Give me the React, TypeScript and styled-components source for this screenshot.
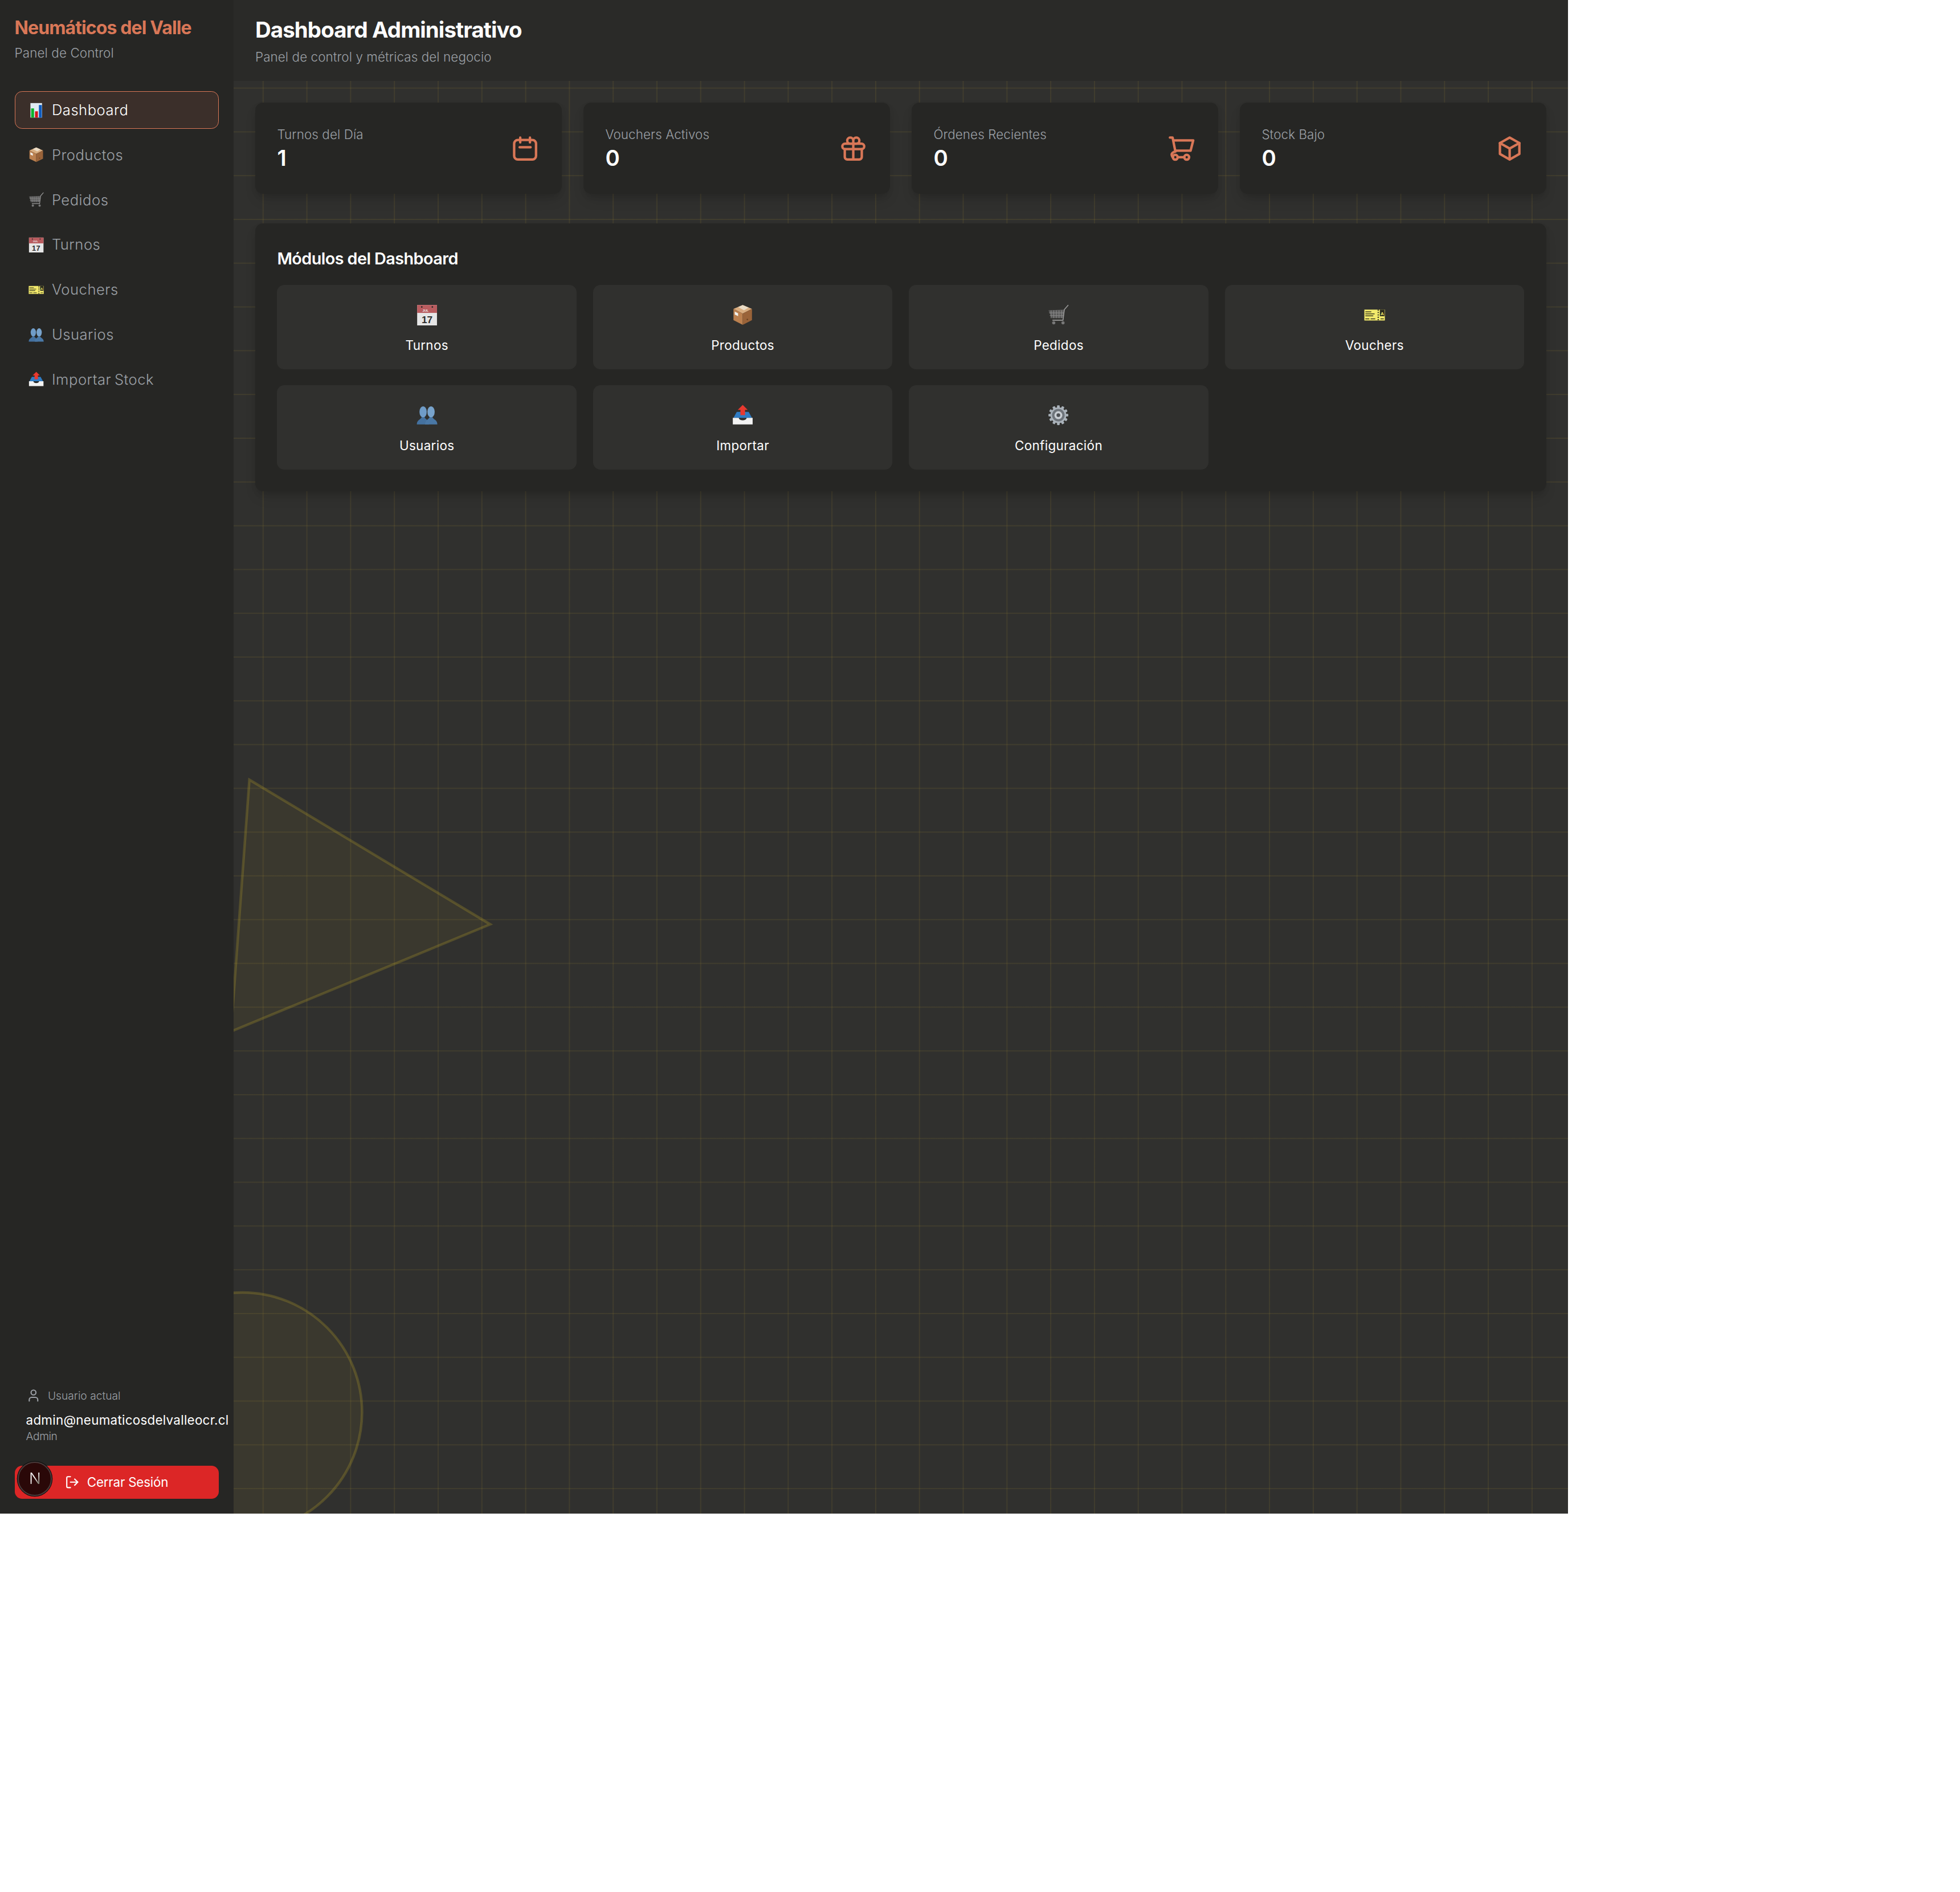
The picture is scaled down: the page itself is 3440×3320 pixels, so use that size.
import React from "react";
import styled, { createGlobalStyle } from "styled-components";
import { User, LogOut } from "lucide-react";

const Global = createGlobalStyle`
  html { font-size: 25.6px; }
  body { margin: 0; background: #fff; font-family: Inter, "Noto Sans", "Liberation Sans", sans-serif; }
  * { box-sizing: border-box; }
`;

const Page = styled.div`
  display: flex;
  width: 107.5rem;
  height: 103.75rem;
  overflow: hidden;
  background-color: #30302e;
  background-image:
    linear-gradient(rgba(205, 170, 50, 0.1) 0.0625rem, transparent 0.0625rem),
    linear-gradient(90deg, rgba(205, 170, 50, 0.1) 0.0625rem, transparent 0.0625rem);
  background-size: 3rem 3rem;
`;

const Sidebar = styled.aside`
  flex: 0 0 16rem;
  min-width: 0;
  display: flex;
  flex-direction: column;
  position: relative;
  background: #262624;
`;
const Brand = styled.div`
  padding: 1.05rem 1rem 1rem;
`;
const BrandName = styled.h1`
  margin: 0;
  font-size: 1.25rem;
  line-height: 1.75rem;
  font-weight: 700;
  letter-spacing: -0.028em;
  color: #d97757;
`;
const BrandSub = styled.p`
  margin: 0.2rem 0 0;
  font-size: 0.875rem;
  line-height: 1.25rem;
  font-weight: 300;
  letter-spacing: 0.005em;
  color: #9ca0a6;
`;
const Nav = styled.nav`
  flex: 1;
  display: flex;
  flex-direction: column;
  gap: 0.515rem;
  padding: 1rem;
`;
const NavItem = styled.a<{ $active?: boolean }>`
  display: flex;
  align-items: center;
  gap: 0.5625rem;
  height: 2.5625rem;
  padding: 0.04rem 0.95rem 0;
  border: 0.0625rem solid ${(p) => (p.$active ? "#d97757" : "transparent")};
  border-radius: 0.5rem;
  background: ${(p) => (p.$active ? "rgba(217, 119, 87, 0.12)" : "transparent")};
  color: ${(p) => (p.$active ? "#fff" : "#9ca0a6")};
  font-size: 1rem;
  line-height: 1.5rem;
  font-weight: 300;
  letter-spacing: 0.02em;
  word-spacing: -0.08em;
`;
const NavEmoji = styled.span`
  display: flex;
  width: 1rem;
  height: 1rem;
  font-size: 1.0625rem;
  align-items: center;
  justify-content: center;
`;
const Footer = styled.div`
  padding: 0 1rem 1rem;
`;
const UserCard = styled.div`
  padding: 0.75rem 0.75rem 0.75rem 0.78rem;
  margin-bottom: 0.75rem;
`;
const UserLabel = styled.div`
  display: flex;
  align-items: center;
  gap: 0.5rem;
  height: 1rem;
  margin-bottom: 0.55rem;
  font-size: 0.75rem;
  font-weight: 300;
  letter-spacing: 0;
  color: #9ca0a6;
  svg { width: 1rem; height: 1rem; }
`;
const UserEmail = styled.div`
  font-size: 0.875rem;
  line-height: 1.25rem;
  letter-spacing: 0.012em;
  color: #fff;
  white-space: nowrap;
`;
const UserRole = styled.div`
  font-size: 0.75rem;
  line-height: 1rem;
  font-weight: 300;
  color: #9ca0a6;
  letter-spacing: -0.02em;
`;
const LogoutButton = styled.button`
  display: flex;
  align-items: center;
  justify-content: center;
  gap: 0.5rem;
  width: 100%;
  height: 2.3rem;
  border: 0;
  border-radius: 0.5rem;
  background: #dc2626;
  color: #fff;
  font-family: inherit;
  font-size: 0.875rem;
  letter-spacing: -0.01em;
  svg { width: 1rem; height: 1rem; }
`;
const DevBadge = styled.div`
  position: absolute;
  left: 1.22rem;
  bottom: 1.2rem;
  width: 2.35rem;
  height: 2.35rem;
  border-radius: 50%;
  background: #2a0808;
  border: 0.08rem solid #4a3a3a;
  box-shadow: 0 0 0 0.05rem #111;
  display: flex;
  align-items: center;
  justify-content: center;
  padding-bottom: 0.1rem;
`;
const DevLetter = styled.span`
  font-size: 1.07rem;
  font-weight: 300;
  background: linear-gradient(135deg, #fff 45%, #554 90%);
  -webkit-background-clip: text;
  background-clip: text;
  color: transparent;
`;

const Column = styled.div`
  position: relative;
  flex: 1;
  min-width: 0;
  display: flex;
  flex-direction: column;
  overflow: hidden;
`;
const Deco = styled.svg`
  position: absolute;
  inset: 0;
  width: 100%;
  height: 100%;
`;
const Header = styled.header`
  position: relative;
  height: 142px;
  padding: 1.05rem 1.5rem 0;
  background: #2a2a28;
`;
const Title = styled.h2`
  margin: 0;
  font-size: 1.5rem;
  line-height: 2rem;
  font-weight: 700;
  letter-spacing: -0.023em;
  color: #fff;
`;
const Subtitle = styled.p`
  margin: 0.25rem 0 0;
  font-size: 0.875rem;
  line-height: 1.25rem;
  font-weight: 300;
  letter-spacing: 0.004em;
  color: #9ca0a6;
`;
const Content = styled.main`
  position: relative;
  padding: 1.5rem;
`;
const Stats = styled.section`
  display: grid;
  grid-template-columns: repeat(4, 1fr);
  gap: 1.5rem;
  margin-bottom: 2rem;
`;
const StatCard = styled.div`
  display: flex;
  align-items: center;
  justify-content: space-between;
  height: 6.25rem;
  padding: 1.5rem;
  border-radius: 0.55rem;
  background: #262624;
  box-shadow: 0 0.5rem 0.9rem -0.2rem rgba(0, 0, 0, 0.14), 0 0.2rem 0.4rem -0.1rem rgba(0, 0, 0, 0.1);
`;
const StatText = styled.div`
  padding-top: 0.08rem;
`;
const StatIcon = styled.svg`
  width: 2rem;
  height: 2rem;
  fill: none;
  stroke: #d97757;
  stroke-width: 2;
  stroke-linecap: round;
  stroke-linejoin: round;
`;
const StatLabel = styled.div`
  font-size: 0.875rem;
  line-height: 1.25rem;
  font-weight: 300;
  letter-spacing: 0.004em;
  color: #9ca0a6;
`;
const StatValue = styled.div`
  font-size: 1.5rem;
  line-height: 2rem;
  font-weight: 600;
  color: #fff;
`;
const Panel = styled.section`
  padding: 1.5rem;
  border-radius: 0.55rem;
  background: #262624;
  box-shadow: 0 0.5rem 0.9rem -0.2rem rgba(0, 0, 0, 0.14), 0 0.2rem 0.4rem -0.1rem rgba(0, 0, 0, 0.1);
`;
const PanelTitle = styled.h3`
  margin: 0 0 0.92rem;
  padding-top: 0.08rem;
  font-size: 1.125rem;
  line-height: 1.75rem;
  font-weight: 600;
  letter-spacing: -0.02em;
  color: #fff;
`;
const Tiles = styled.div`
  display: grid;
  grid-template-columns: repeat(4, 1fr);
  gap: 1.125rem;
`;
const Tile = styled.a`
  display: flex;
  flex-direction: column;
  align-items: center;
  height: 5.75rem;
  padding: 1rem;
  border-radius: 0.5rem;
  background: #30302e;
`;
const TileEmoji = styled.span`
  display: flex;
  align-items: center;
  justify-content: center;
  height: 2rem;
  padding-top: 0.15rem;
  margin-bottom: 0.55rem;
  font-size: 1.45rem;
`;
const TileLabel = styled.span`
  font-size: 0.875rem;
  line-height: 1.25rem;
  letter-spacing: 0.015em;
  color: #fff;
`;

const Svg = styled.svg`
  display: block;
  width: 1em;
  height: 1em;
  flex: none;
`;

const ChartEmoji = () => (
  <Svg viewBox="0 0 32 32">
    <rect x="4" y="1" width="24" height="30" fill="#dfe9f2" />
    <rect x="5.5" y="12" width="6" height="19" fill="#0db42c" />
    <rect x="13.5" y="18" width="6" height="13" fill="#d3141c" />
    <rect x="21.5" y="5" width="6" height="26" fill="#0f5cc0" />
  </Svg>
);
const BoxEmoji = () => (
  <Svg viewBox="0 0 32 32">
    <polygon points="16,1 30,7 16,14 2,7" fill="#d9ad80" />
    <polygon points="2,7 16,14 16,31 2,24" fill="#bb804f" />
    <polygon points="30,7 16,14 16,31 30,24" fill="#9a6339" />
    <polygon points="9,4 16,1 25,5 18,9" fill="#eadcc6" />
    <polygon points="4,11 9,13.5 9,18 4,15.5" fill="#f1f1ee" />
    <circle cx="23" cy="23" r="1.2" fill="#6f4523" />
  </Svg>
);
const CartEmoji = () => (
  <Svg viewBox="0 0 32 32">
    <path d="M1 9 L25 8 L23 21 L6 21 Z" fill="#5a5a5a" />
    <path d="M5 9v12M9 9v12M13 9v12M17 9v12M21 9v12M2 13h22M3 17h21" stroke="#8a8a8a" strokeWidth="0.9" fill="none" />
    <path d="M31 1 L25 8 L23 24 L7 24" stroke="#9a9a9a" strokeWidth="1.4" fill="none" />
    <circle cx="9" cy="28" r="2.4" fill="#777" />
    <circle cx="23" cy="28" r="2.4" fill="#777" />
  </Svg>
);
const CalendarEmoji = () => (
  <Svg viewBox="0 0 32 32">
    <rect x="1" y="1" width="30" height="31" fill="#e6e6e6" />
    <rect x="1" y="1" width="30" height="12" fill="#b95c5f" />
    <circle cx="8" cy="4" r="1.2" fill="#2a2a2a" />
    <circle cx="24" cy="4" r="1.2" fill="#2a2a2a" />
    <text x="9" y="11" fontSize="5" fontFamily="Liberation Sans" fontWeight="700" fill="#eee">JUL</text>
    <text x="16" y="28.5" fontSize="15" textAnchor="middle" fontFamily="Liberation Sans" fontWeight="700" fill="#2c2c2c">17</text>
  </Svg>
);
const TicketEmoji = () => (
  <Svg viewBox="0 0 32 32">
    <rect x="0.5" y="8" width="31" height="16.5" fill="#f3ea6c" />
    <path d="M2 11.5h9M2 14.5h14M2 17.5h12M2 22h6M10 22h7M25 22h5" stroke="#3a3a20" strokeWidth="1.3" fill="none" />
    <rect x="24" y="8" width="7" height="10" fill="#2c2c1e" />
    <text x="27.5" y="16.5" fontSize="7" textAnchor="middle" fontFamily="Liberation Sans" fontWeight="700" fill="#f3ea6c">A</text>
    <path d="M21.5 8v17" stroke="#2c2c1e" strokeWidth="2" strokeDasharray="1.6 2" />
  </Svg>
);
const BustsEmoji = () => (
  <Svg viewBox="0 0 32 32">
    <ellipse cx="10" cy="11" rx="5.5" ry="8.5" fill="#6f9cc8" />
    <path d="M0.5 30 C0.5 23 6 23 8 19 L12 19 C14 23 19 23 19 30 Z" fill="#44719f" />
    <ellipse cx="22" cy="11" rx="5.5" ry="8.5" fill="#78a3cc" />
    <path d="M13 30 C13 23 18 23 20 19 L24 19 C26 23 31.5 23 31.5 30 Z" fill="#4a78a6" />
  </Svg>
);
const OutboxEmoji = () => (
  <Svg viewBox="0 0 32 32">
    <polygon points="7,11 25,11 30,20 2,20" fill="#2f7cc4" />
    <polygon points="16,0.5 23.5,8 19.5,8 19.5,16 12.5,16 12.5,8 8.5,8" fill="#e8392f" />
    <path d="M1 20 H10 C11 25 21 25 22 20 H31 V30 H1 Z" fill="#f2f2f2" />
  </Svg>
);
const GearEmoji = () => (
  <Svg viewBox="0 0 32 32">
    {Array.from({ length: 12 }, (_, i) => (
      <rect key={i} x="14" y="1" width="4" height="6" rx="1" fill="#aab2ba" transform={`rotate(${i * 30} 16 16)`} />
    ))}
    <circle cx="16" cy="16" r="12" fill="#aab2ba" />
    <circle cx="16" cy="16" r="9.5" fill="#6e747b" />
    <circle cx="16" cy="16" r="6" fill="#c9ced4" />
    <circle cx="16" cy="16" r="2.8" fill="#4c4f54" />
  </Svg>
);

const CalendarIcon = () => (
  <StatIcon viewBox="0 0 24 24">
    <rect x="3" y="5" width="18" height="16" rx="3" />
    <path d="M8 3v4M16 3v4M7.5 11h9" />
  </StatIcon>
);
const GiftIcon = () => (
  <StatIcon viewBox="0 0 24 24">
    <rect x="3" y="8" width="18" height="4.5" rx="2.2" />
    <path d="M12 8v13M5 12.5V19a2 2 0 0 0 2 2h10a2 2 0 0 0 2-2v-6.5" />
    <path d="M12 8V5.5A2.5 2.5 0 1 0 9.5 8H12M12 8V5.5A2.5 2.5 0 1 1 14.5 8H12" />
  </StatIcon>
);
const CartIcon = () => (
  <StatIcon viewBox="0 0 24 24">
    <path d="M2.5 3H4.7L7 14.5C5 15 3.6 16 4 17.5C4.2 18.4 4.4 19 5 19.2" />
    <path d="M5.3 5.3H21.7L19.5 13.8H6.9" />
    <path d="M9 19.2h5.3" />
    <circle cx="6.9" cy="19.2" r="2" />
    <circle cx="16.3" cy="19.2" r="2" />
  </StatIcon>
);
const BoxIcon = () => (
  <StatIcon viewBox="0 0 24 24">
    <path d="M12 3l8 4.5v9L12 21l-8-4.5v-9z" />
    <path d="M4 7.5l8 4.5 8-4.5M12 12v9" />
  </StatIcon>
);

const navItems = [
  { label: "Dashboard", icon: <ChartEmoji />, active: true },
  { label: "Productos", icon: <BoxEmoji /> },
  { label: "Pedidos", icon: <CartEmoji /> },
  { label: "Turnos", icon: <CalendarEmoji /> },
  { label: "Vouchers", icon: <TicketEmoji /> },
  { label: "Usuarios", icon: <BustsEmoji /> },
  { label: "Importar Stock", icon: <OutboxEmoji /> },
];
const stats = [
  { label: "Turnos del Día", value: "1", icon: <CalendarIcon /> },
  { label: "Vouchers Activos", value: "0", icon: <GiftIcon /> },
  { label: "Órdenes Recientes", value: "0", icon: <CartIcon /> },
  { label: "Stock Bajo", value: "0", icon: <BoxIcon /> },
];
const tiles = [
  { label: "Turnos", icon: <CalendarEmoji /> },
  { label: "Productos", icon: <BoxEmoji /> },
  { label: "Pedidos", icon: <CartEmoji /> },
  { label: "Vouchers", icon: <TicketEmoji /> },
  { label: "Usuarios", icon: <BustsEmoji /> },
  { label: "Importar", icon: <OutboxEmoji /> },
  { label: "Configuración", icon: <GearEmoji /> },
];

export default function App() {
  return (
    <>
      <Global />
      <Page>
        <Sidebar>
          <Brand>
            <BrandName>Neumáticos del Valle</BrandName>
            <BrandSub>Panel de Control</BrandSub>
          </Brand>
          <Nav>
            {navItems.map((n) => (
              <NavItem key={n.label} $active={n.active}>
                <NavEmoji>{n.icon}</NavEmoji>
                {n.label}
              </NavItem>
            ))}
          </Nav>
          <Footer>
            <UserCard>
              <UserLabel>
                <User />
                Usuario actual
              </UserLabel>
              <UserEmail>admin@neumaticosdelvalleocr.cl</UserEmail>
              <UserRole>Admin</UserRole>
            </UserCard>
            <LogoutButton>
              <LogOut />
              Cerrar Sesión
            </LogoutButton>
          </Footer>
          <DevBadge>
            <DevLetter>N</DevLetter>
          </DevBadge>
        </Sidebar>
        <Column>
          <Deco viewBox="409.6 0 2342.4 2656" preserveAspectRatio="none">
            <polygon points="437.3,1368.3 860,1622 405,1810" fill="rgba(205,175,50,0.07)" stroke="rgba(190,165,40,0.26)" strokeWidth="4.5" />
            <circle cx="425" cy="2478" r="210" fill="rgba(205,175,50,0.07)" stroke="rgba(190,165,40,0.26)" strokeWidth="4.5" />
          </Deco>
          <Header>
            <Title>Dashboard Administrativo</Title>
            <Subtitle>Panel de control y métricas del negocio</Subtitle>
          </Header>
          <Content>
            <Stats>
              {stats.map((s) => (
                <StatCard key={s.label}>
                  <StatText>
                    <StatLabel>{s.label}</StatLabel>
                    <StatValue>{s.value}</StatValue>
                  </StatText>
                  {s.icon}
                </StatCard>
              ))}
            </Stats>
            <Panel>
              <PanelTitle>Módulos del Dashboard</PanelTitle>
              <Tiles>
                {tiles.map((t) => (
                  <Tile key={t.label}>
                    <TileEmoji>{t.icon}</TileEmoji>
                    <TileLabel>{t.label}</TileLabel>
                  </Tile>
                ))}
              </Tiles>
            </Panel>
          </Content>
        </Column>
      </Page>
    </>
  );
}
